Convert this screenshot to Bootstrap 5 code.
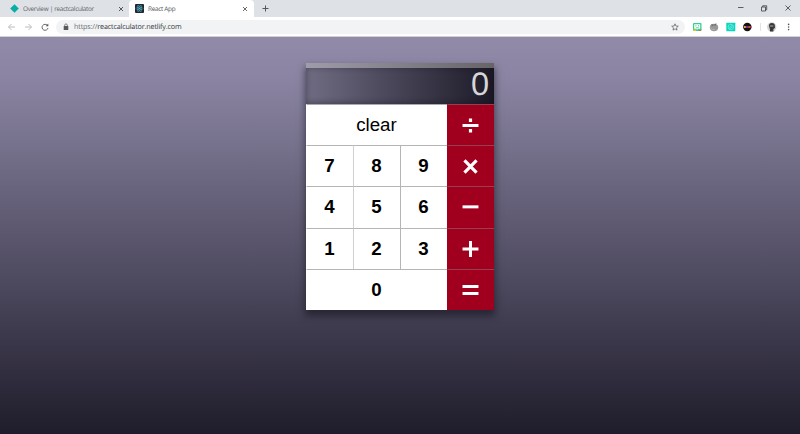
<!DOCTYPE html>
<html lang="en">
<head>
<meta charset="utf-8">
<meta name="viewport" content="width=device-width, initial-scale=1">
<title>React App</title>
<link href="https://cdn.jsdelivr.net/npm/bootstrap@5.3.0/dist/css/bootstrap.min.css" rel="stylesheet">
<style>
html,body{height:100%}
body{font-family:"Open Sans","Noto Sans",sans-serif;overflow:hidden;line-height:1;text-rendering:geometricPrecision}
svg{display:block;flex:none}
.tabstrip{height:17px;background:#dee1e6;font-size:6.4px;letter-spacing:-.3px;color:#5f6267}
.tab-idle{width:129px;padding:0 5px 0 10px}
.tab-live{width:125px;background:#fff;border-radius:4px 4px 0 0;padding:0 6px 0 6px;color:#4b4e52}
.tab-live,.tab-idle{height:17px}
.tab-live span,.tab-idle span{padding-top:1px}
.tools{height:20px;background:#fff;border-bottom:1px solid #d2d2d6;padding:0 8px 0 7px}
.omni{height:14px;border-radius:7px;background:#f1f3f4;width:629px;margin-left:6px;padding:0 6px 0 7px;font-size:7.2px;letter-spacing:-.16px;color:#35383c}
.omni .addr{margin-left:5px;padding-top:1.500px}
.omni .scheme{color:#6c7075}
.desk{background:linear-gradient(#918ba9,#8b85a3 10%,#1f1c2b);padding-top:26px}
.calc{width:188px;height:247px;box-shadow:0 5px 7px 1px rgba(18,16,28,.55);font-family:"Liberation Sans",Arial,sans-serif}
.screen{height:41px;background:linear-gradient(90deg,#706c83,#1c1927);border-top:5px solid #89868f;box-shadow:inset 0 -1px 6px rgba(15,13,24,.4);border-image:linear-gradient(90deg,#a09daa,#666468) 1;border-width:5px 0 0;color:#d6d6d6;font-size:32.500px;padding:0 5px 4px 0}
.keys{display:grid;grid-template-columns:repeat(4,47px);grid-template-rows:41px 41px 42px 41px 41px}
.key{background:#fff;border:0;border-top:1px solid #b5b5b5;border-left:1px solid #d0d0d0;border-radius:0;padding:0 1px 0 0;color:#000;font-size:18.7px;font-weight:700;line-height:1}
.key.edge{border-left-color:#fff}
.key.third{border-left-color:#b5b5b5}
.key.wide{grid-column:span 3}
.key.plain{font-weight:400;border-top-color:#aaa}
.key.op{background:#a0001e;border-top-color:#98404f;border-left-color:#a0001e}
.key.op svg{width:17px;height:17px}
</style>
</head>
<body class="d-flex flex-column">
<div class="tabstrip d-flex align-items-center flex-shrink-0">
  <div class="tab-idle d-flex align-items-center">
    <svg width="9" height="9" viewBox="0 0 9 9"><path d="M4.5.2 8.8 4.5 4.5 8.8.2 4.5z" fill="#08ada5"/></svg>
    <span class="ms-1 text-nowrap">Overview | reactcalculator</span>
    <svg class="ms-auto" width="6" height="6" viewBox="0 0 6 6"><path d="m1 1 4 4M5 1 1 5" stroke="#55585d"/></svg>
  </div>
  <div class="tab-live d-flex align-items-center">
    <svg width="9" height="9" viewBox="0 0 9 9"><rect width="9" height="9" rx="1" fill="#20262c"/><g fill="none" stroke="#4ba9bd" stroke-width=".6"><ellipse cx="4.5" cy="4.5" rx="3.5" ry="1.4"/><ellipse cx="4.5" cy="4.5" rx="3.5" ry="1.4" transform="rotate(60 4.5 4.5)"/><ellipse cx="4.5" cy="4.5" rx="3.5" ry="1.4" transform="rotate(120 4.5 4.5)"/></g><circle cx="4.5" cy="4.5" r=".7" fill="#55bed4"/></svg>
    <span class="ms-1 text-nowrap">React App</span>
    <svg class="ms-auto" width="6" height="6" viewBox="0 0 6 6"><path d="m1 1 4 4M5 1 1 5" stroke="#55585d" stroke-width=".9"/></svg>
  </div>
  <svg class="ms-2" width="7" height="7" viewBox="0 0 7 7"><path d="M3.5.5v6M.5 3.5h6" stroke="#55585d"/></svg>
  <svg class="ms-auto me-2" width="54" height="9" viewBox="0 0 54 9"><g fill="none" stroke="#3b3d40" stroke-width=".8"><path d="M0 3.500h5.500M23.500 3h4v4h-4zM24.700 3V1.800h4v4h-1.200M47.500 1.500l5 5M52.500 1.500l-5 5"/></g></svg>
</div>
<div class="tools d-flex align-items-center flex-shrink-0">
  <svg width="43" height="10" viewBox="0 0 43 10"><g fill="none" stroke-width=".9"><path d="M8 5H1.5M4.500 2l-3 3 3 3M18 5h6.500M21.500 2l3 3-3 3" stroke="#b3b5b8"/><path d="M40.400 3.400A3 3 0 1 0 41 6" stroke="#55585d"/><path d="M41.300 1.500v2.700h-2.700z" fill="#55585d"/></g></svg>
  <div class="omni d-flex align-items-center">
    <svg width="6" height="8" viewBox="0 0 6 8"><rect x=".7" y="3" width="4.600" height="4" rx=".5" fill="#55585d"/><path d="M1.700 3V2.200a1.300 1.300 0 0 1 2.600 0V3" fill="none" stroke="#55585d" stroke-width=".7"/></svg>
    <span class="addr"><span class="scheme">https://</span>reactcalculator.netlify.com</span>
    <svg class="ms-auto" width="8" height="8" viewBox="0 0 8 8"><path d="m4 .8.9 2.200 2.400.2-1.800 1.600.5 2.300-2-1.200-2 1.200.5-2.300L.7 3.200l2.400-.2z" fill="none" stroke="#55585d" stroke-width=".7"/></svg>
  </div>
  <svg class="ms-auto" width="100" height="12" viewBox="0 0 100 12">
    <rect x="1" y="2" width="8.500" height="8" rx="1" fill="#35cf91"/><path d="M1 8.500h3V10H2z" fill="#f4c51d"/><path d="M7 9h2.500V7.500L9 10H7z" fill="#e5623e"/><path d="M2.200 3.200h6v4.600H6L4.700 9.200V7.800H2.200z" fill="#fff"/><path d="M3.900 4.200v1.100M6.500 4.200v1.100M3.800 6.200c.7.8 2.100.8 2.800 0" stroke="#25bf83" stroke-width=".8" fill="none"/>
    <ellipse cx="22" cy="6.500" rx="4.200" ry="3.700" fill="#999"/><path d="m19 3.200 3 .5 2.500-1.700-.7 2.800-2-.5-1.800 1z" fill="#707070"/><path d="M18.500 7q1.500 2 4 1.500" stroke="#bdbdbd" stroke-width=".8" fill="none"/>
    <rect x="34.300" y="1.700" width="9" height="8.600" rx=".6" fill="#0bd5bf"/><g fill="none" stroke="#9af3e6" stroke-width=".6"><circle cx="38.800" cy="6" r="2.700"/><path d="m37.300 6.500 3-2M37.300 8l3-2"/></g>
    <circle cx="55.300" cy="6" r="4.200" fill="#111"/><path d="M51.300 5h8v2h-8z" fill="#8d2b42"/><path d="M52 5h1.700v2H52z" fill="#e6ad2b"/><path d="M56.500 5H58v2h-1.500z" fill="#d34a36"/><path d="M54.300 5h1.400v2h-1.400z" fill="#7834a3"/>
    <path d="M68.500 2v8" stroke="#d9dbde" stroke-width=".8"/>
    <circle cx="79.700" cy="6" r="4.700" fill="#d2d3d5"/><path d="M76.900 5a3 3 0 0 1 6 0v2l-1.500 1v2.500h-3.500V8z" fill="#37383c"/><path d="M77.800 4.500h3.500v1h-3.500z" fill="#c4a99b"/>
    <g fill="#505357"><circle cx="96.600" cy="3.400" r=".8"/><circle cx="96.600" cy="6" r=".8"/><circle cx="96.600" cy="8.600" r=".8"/></g>
  </svg>
</div>
<main class="desk flex-grow-1 d-flex justify-content-center align-items-start">
  <div class="calc">
    <div class="screen d-flex justify-content-end align-items-center">0</div>
    <div class="keys">
      <button class="key wide plain edge">clear</button>
      <button class="key op" aria-label="divide"><svg class="mx-auto" viewBox="0 0 16 16"><path d="M.5 6.500h15v3H.5zM6.500 1.500h3v3.200h-3zM6.500 11.300h3v3.200h-3z" fill="#fff"/></svg></button>
      <button class="key edge">7</button><button class="key">8</button><button class="key third">9</button>
      <button class="key op" aria-label="multiply"><svg class="mx-auto" viewBox="0 0 16 16"><path d="m2.300 2.300 11.400 11.400M13.700 2.300 2.300 13.700" stroke="#fff" stroke-width="3"/></svg></button>
      <button class="key edge">4</button><button class="key">5</button><button class="key third">6</button>
      <button class="key op" aria-label="subtract"><svg class="mx-auto" viewBox="0 0 16 16"><path d="M.5 6h15v2.800H.5z" fill="#fff"/></svg></button>
      <button class="key edge">1</button><button class="key">2</button><button class="key third">3</button>
      <button class="key op" aria-label="add"><svg class="mx-auto" viewBox="0 0 16 16"><path d="M.5 7.500h15M8 .1v15" stroke="#fff" stroke-width="2.800"/></svg></button>
      <button class="key wide edge">0</button>
      <button class="key op" aria-label="equals"><svg class="mx-auto" viewBox="0 0 16 16"><path d="M.5 2.800h15v2.800H.5zM.5 9.400h15v2.800H.5z" fill="#fff"/></svg></button>
    </div>
  </div>
</main>
<script src="https://cdn.jsdelivr.net/npm/bootstrap@5.3.0/dist/js/bootstrap.bundle.min.js"></script>
</body>
</html>
